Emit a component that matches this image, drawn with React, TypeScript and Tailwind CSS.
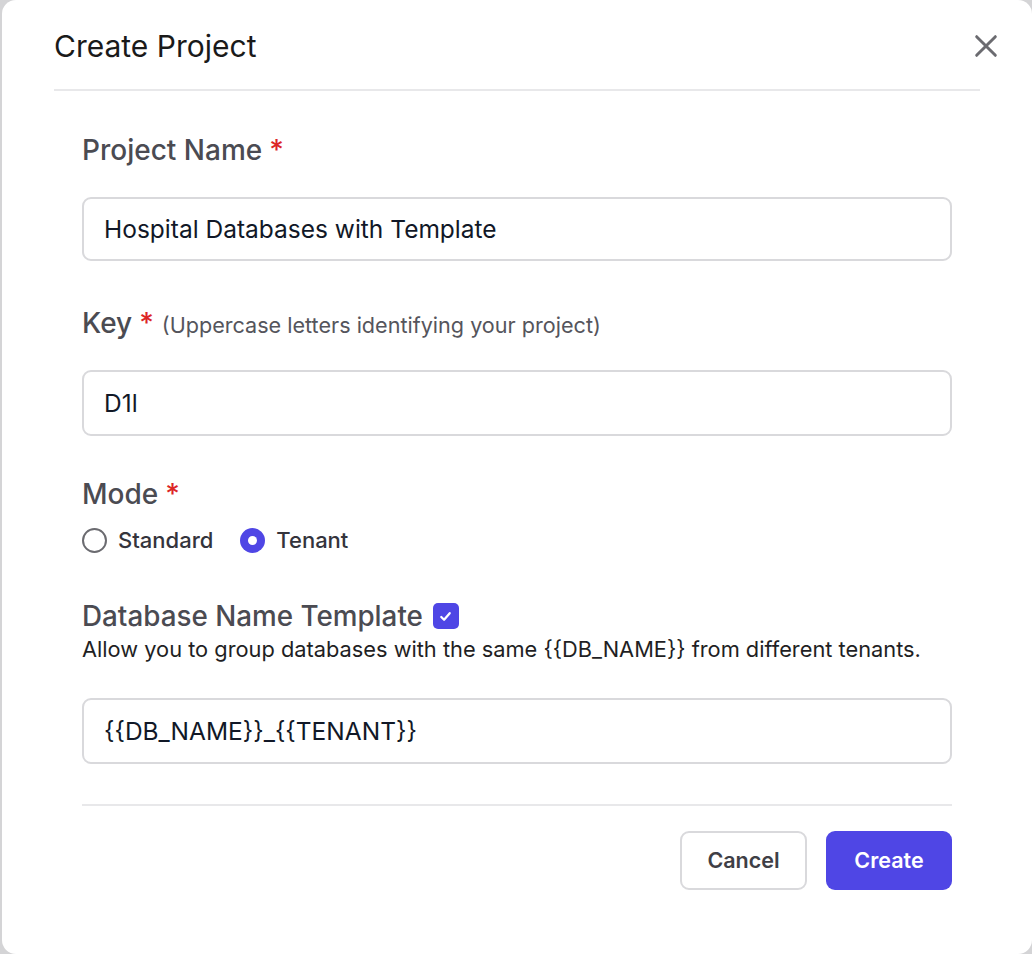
import { useState } from 'react';

const MODES = [
  { value: 'standard', label: 'Standard' },
  { value: 'tenant', label: 'Tenant' },
];

function Required() {
  return <span className="ml-[7px] text-[#dc2626]">*</span>;
}

export default function App() {
  const [name, setName] = useState('Hospital Databases with Template');
  const [key, setKey] = useState('D1l');
  const [mode, setMode] = useState('tenant');
  const [useTemplate, setUseTemplate] = useState(true);
  const [template, setTemplate] = useState('{{DB_NAME}}_{{TENANT}}');

  const inputClass =
    'block w-full rounded-[9px] border-2 border-[#d9d9dc] bg-white px-[20px] text-[24.5px] text-[#111827] outline-none';

  return (
    <div className="h-[954px] w-[1032px] bg-[#d4d4d6] pl-[2px] font-['Inter',sans-serif]">
      <div className="h-full w-full rounded-[14px] bg-white">
        {/* Header */}
        <div className="flex items-start justify-between pl-[52px] pr-[30px] pt-[28px]">
          <h2 className="text-[30px] leading-[36px] font-normal text-[#1a1a1a]">Create Project</h2>
          <button className="mt-[2px] text-[#6b6b70]">
            <svg width="32" height="32" viewBox="0 0 24 24" fill="none" stroke="currentColor" strokeWidth="2.2" strokeLinecap="round">
              <path d="M5 5l14 14M19 5L5 19" />
            </svg>
          </button>
        </div>
        <div className="mx-[52px] mt-[25px] h-[2px] bg-[#e8e8ea]" />

        {/* Body */}
        <div className="px-[80px] pt-[42px]">
          <label className="block text-[28px] leading-[34px] font-medium text-[#4b4b52]">
            Project Name
            <Required />
          </label>
          <input className={`${inputClass} mt-[30px] h-[64px]`} value={name} onChange={(e) => setName(e.target.value)} />

          <label className="mt-[45px] block text-[28px] leading-[34px] font-medium text-[#4b4b52]">
            Key
            <Required />
            <span className="ml-[8px] text-[21.6px] font-normal text-[#55555c]">(Uppercase letters identifying your project)</span>
          </label>
          <input className={`${inputClass} mt-[28px] h-[66px]`} value={key} onChange={(e) => setKey(e.target.value)} />

          <label className="mt-[41px] block text-[28px] leading-[34px] font-medium text-[#4b4b52]">
            Mode
            <Required />
          </label>
          <div className="mt-[13px] flex items-center gap-[27px]">
            {MODES.map((m) => (
              <label key={m.value} className="flex cursor-pointer items-center gap-[11px]" onClick={() => setMode(m.value)}>
                {mode === m.value ? (
                  <span className="flex h-[25px] w-[25px] items-center justify-center rounded-full bg-[#4f46e5]">
                    <span className="h-[9px] w-[9px] rounded-full bg-white" />
                  </span>
                ) : (
                  <span className="h-[25px] w-[25px] rounded-full border-2 border-[#6b6b70] bg-white" />
                )}
                <span className="text-[22px] leading-[33px] font-medium text-[#34343c]">{m.label}</span>
              </label>
            ))}
          </div>

          <div className="mt-[42px] flex items-center gap-[10px]">
            <span className="text-[27.8px] leading-[34px] font-medium text-[#4b4b52]">Database Name Template</span>
            <button
              className={`flex h-[26px] w-[26px] items-center justify-center rounded-[5px] ${useTemplate ? 'bg-[#4f46e5]' : 'border-2 border-[#6b6b70] bg-white'}`}
              onClick={() => setUseTemplate(!useTemplate)}
            >
              {useTemplate && (
                <svg width="15" height="15" viewBox="0 0 16 16" fill="none" stroke="white" strokeWidth="2.4" strokeLinecap="round" strokeLinejoin="round">
                  <path d="M3.5 8.5l3 3 6-7" />
                </svg>
              )}
            </button>
          </div>
          <p className="mt-[1px] text-[21.8px] leading-[30px] text-[#1f1f24]">
            Allow you to group databases with the same {'{{DB_NAME}}'} from different tenants.
          </p>
          <input className={`${inputClass} mt-[34px] h-[66px]`} value={template} onChange={(e) => setTemplate(e.target.value)} />

          <div className="mt-[40px] h-[2px] bg-[#e8e8ea]" />

          <div className="mt-[25px] flex justify-end gap-[19px]">
            <button className="h-[59px] w-[127px] rounded-[9px] border-2 border-[#d9d9dc] bg-white text-[21.5px] font-semibold text-[#3f3f46]">
              Cancel
            </button>
            <button className="h-[59px] w-[126px] rounded-[9px] bg-[#4f46e5] text-[21.5px] font-semibold text-white">
              Create
            </button>
          </div>
        </div>
      </div>
    </div>
  );
}
